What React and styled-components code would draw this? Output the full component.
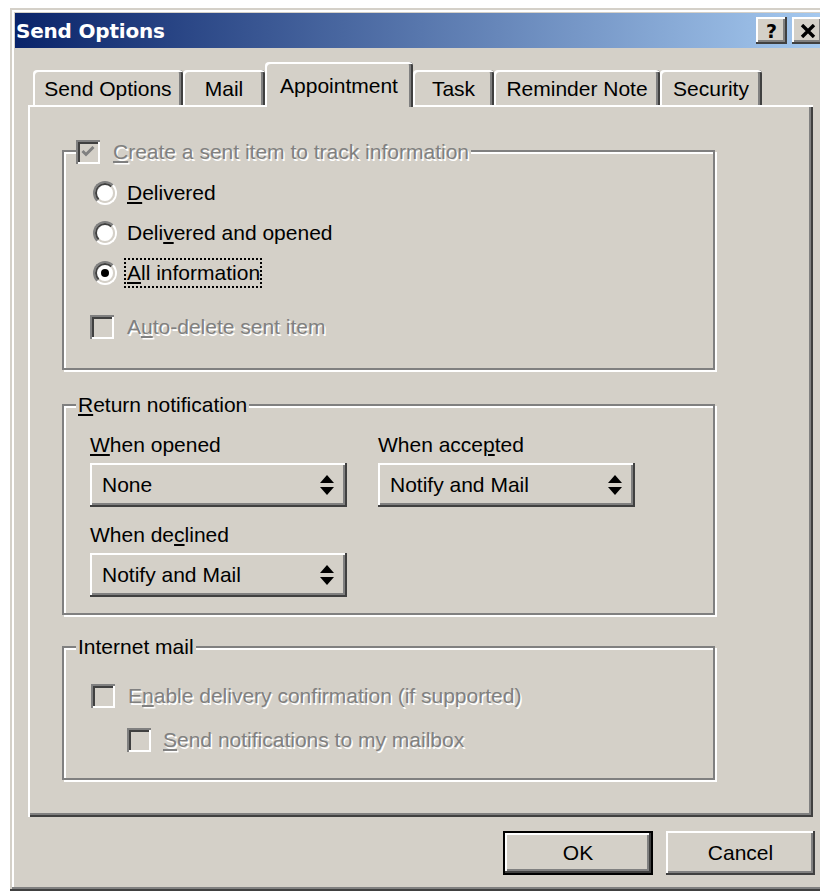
import React from 'react'
import styled, { createGlobalStyle } from 'styled-components'

const GlobalStyle = createGlobalStyle`
  html, body {
    margin: 0;
    background: #fff;
    overflow: hidden;
  }
  body {
    font-family: "Liberation Sans", Arial, sans-serif;
    font-size: 21px;
    color: #000;
  }
  u {
    text-decoration-thickness: 2px;
    text-underline-offset: 2px;
  }
`

const raised = `
  box-shadow: inset -2px -2px #404040, inset 2px 2px #fff,
    inset -4px -4px #808080, inset 4px 4px #d4d0c8;
`

const Window = styled.div`
  box-sizing: border-box;
  width: 822px;
  margin: 8px 0 0 10px;
  padding: 5px;
  background: #d4d0c8;
  box-shadow: inset -2px -2px #404040, inset 2px 2px #d4d0c8,
    inset -4px -4px #808080, inset 4px 4px #fff;
`

const TitleBar = styled.div`
  height: 35px;
  display: flex;
  align-items: center;
  justify-content: space-between;
  padding: 0 4px 0 1px;
  background: linear-gradient(to right, #0a246a, #a6caf0);
`

const Title = styled.span`
  font-family: "DejaVu Sans", Verdana, sans-serif;
  font-weight: bold;
  font-size: 20px;
  letter-spacing: -0.2px;
  color: #fff;
`

const TitleButtons = styled.div`
  display: flex;
  gap: 5px;
`

const TitleButton = styled.div`
  box-sizing: border-box;
  width: 31px;
  height: 27px;
  display: flex;
  align-items: center;
  justify-content: center;
  background: #d4d0c8;
  font-family: "DejaVu Sans", Verdana, sans-serif;
  font-weight: bold;
  font-size: 19px;
  ${raised}
`

const Body = styled.div`
  padding: 14px 14px 0 13px;
`

const TabStrip = styled.div`
  display: flex;
  align-items: flex-end;
  padding-left: 5px;
`

const Tab = styled.div`
  box-sizing: border-box;
  width: ${p => p.$w}px;
  height: ${p => (p.$active ? 45 : 35)}px;
  margin-bottom: ${p => (p.$active ? -2 : 0)}px;
  position: relative;
  z-index: ${p => (p.$active ? 1 : 0)};
  display: flex;
  align-items: center;
  justify-content: center;
  padding-top: 2px;
  background: #d4d0c8;
  border-radius: 4px 4px 0 0;
  white-space: nowrap;
  box-shadow: inset 2px 2px #fff, inset -2px 0 #404040, inset -4px 0 #808080;
`

const Panel = styled.div`
  box-sizing: border-box;
  width: 785px;
  height: 712px;
  padding: 34px 0 0 34px;
  box-shadow: inset 2px 2px #fff, inset -2px -2px #404040, inset -4px -4px #808080;
`

const GroupBox = styled.fieldset`
  box-sizing: border-box;
  width: 653px;
  margin: ${p => p.$top}px 0 0 0;
  padding: ${p => p.$pad};
  border: 2px solid #808080;
  box-shadow: inset 2px 2px #fff, 2px 2px #fff;
  min-inline-size: auto;
`

const Legend = styled.legend`
  margin-left: 12px;
  padding: 0 2px;
  height: 24px;
  line-height: 24px;
  background: #d4d0c8;
`

const LegendRow = styled.span`
  display: inline-flex;
  align-items: center;
  gap: 13px;
  margin-left: -2px;
`

const Caption = styled.span`
  color: ${p => (p.$disabled ? '#808080' : '#000')};
  text-shadow: ${p => (p.$disabled ? '1.5px 1.5px 0 #fff' : 'none')};
  white-space: nowrap;
`

const OptionRow = styled.div`
  display: flex;
  align-items: center;
  height: 40px;
  padding-left: ${p => p.$indent}px;
  margin-top: ${p => p.$top || 0}px;
  gap: ${p => p.$gap}px;
`

const CheckBox = styled.span`
  box-sizing: border-box;
  flex: none;
  width: 24px;
  height: 24px;
  display: flex;
  align-items: center;
  justify-content: center;
  background: ${p => (p.$disabled ? '#d4d0c8' : '#fff')};
  box-shadow: inset 2px 2px #808080, inset -2px -2px #fff,
    inset 4px 4px #404040, inset -4px -4px #d4d0c8;
`

const RadioOuter = styled.span`
  box-sizing: border-box;
  flex: none;
  width: 24px;
  height: 24px;
  border-radius: 50%;
  border: 2px solid;
  border-color: #808080 #fff #fff #808080;
`

const RadioInner = styled.span`
  box-sizing: border-box;
  width: 100%;
  height: 100%;
  display: flex;
  align-items: center;
  justify-content: center;
  border-radius: 50%;
  border: 2px solid;
  border-color: #404040 #d4d0c8 #d4d0c8 #404040;
  background: #fff;
`

const RadioDot = styled.span`
  width: 8px;
  height: 8px;
  border-radius: 50%;
  background: #000;
`

const FocusLabel = styled.span`
  padding: 2px 0 2px 1px;
  border: 2px dotted #000;
  margin-left: -3px;
  line-height: 22px;
  white-space: nowrap;
`

const FieldGrid = styled.div`
  display: grid;
  grid-template-columns: 257px 257px;
  column-gap: 31px;
  row-gap: 14px;
  padding: 14px 0 16px 26px;
`

const Field = styled.div`
  display: flex;
  flex-direction: column;
  gap: 4px;
`

const FieldLabel = styled.div`
  height: 28px;
  line-height: 28px;
`

const Select = styled.div`
  box-sizing: border-box;
  width: 257px;
  height: 44px;
  display: flex;
  align-items: center;
  justify-content: space-between;
  padding: 0 13px 0 12px;
  background: #d4d0c8;
  ${raised}
`

const ButtonRow = styled.div`
  display: flex;
  justify-content: flex-end;
  gap: 13px;
  padding: 14px 0 11px 0;
  margin-right: -2px;
`

const PushButton = styled.button`
  box-sizing: border-box;
  width: ${p => p.$w}px;
  height: 44px;
  padding: 0;
  font: inherit;
  color: #000;
  background: #d4d0c8;
  border: ${p => (p.$default ? '2px solid #000' : 'none')};
  ${raised}
`

const CheckMark = () => (
  <svg width="14" height="12" viewBox="0 0 14 12">
    <polyline points="1.5,5 5,8.5 12.5,1" fill="none" stroke="#808080" strokeWidth="3" />
  </svg>
)

const Arrows = () => (
  <svg width="14" height="22" viewBox="0 0 14 22">
    <polygon points="0,9 7,1 14,9" fill="#000" />
    <polygon points="0,13 7,21 14,13" fill="#000" />
  </svg>
)

const CloseGlyph = () => (
  <svg width="16" height="14" viewBox="0 0 16 14">
    <path d="M2 1 L14 13 M14 1 L2 13" stroke="#000" strokeWidth="3.4" />
  </svg>
)

const Radio = ({ checked }) => (
  <RadioOuter>
    <RadioInner>{checked && <RadioDot />}</RadioInner>
  </RadioOuter>
)

const tabs = [
  { label: 'Send Options', w: 150 },
  { label: 'Mail', w: 82 },
  { label: 'Appointment', w: 148, active: true },
  { label: 'Task', w: 81 },
  { label: 'Reminder Note', w: 166 },
  { label: 'Security', w: 102 },
]

const DropDown = ({ value }) => (
  <Select>
    <span>{value}</span>
    <Arrows />
  </Select>
)

export default function App() {
  return (
    <>
      <GlobalStyle />
      <Window>
        <TitleBar>
          <Title>Send Options</Title>
          <TitleButtons>
            <TitleButton>?</TitleButton>
            <TitleButton>
              <CloseGlyph />
            </TitleButton>
          </TitleButtons>
        </TitleBar>

        <Body>
          <TabStrip>
            {tabs.map(t => (
              <Tab key={t.label} $w={t.w} $active={t.active}>
                {t.label}
              </Tab>
            ))}
          </TabStrip>

          <Panel>
            <GroupBox $top={0} $pad="10px 0 21px 0">
              <Legend>
                <LegendRow>
                  <CheckBox $disabled>
                    <CheckMark />
                  </CheckBox>
                  <Caption $disabled>
                    <u>C</u>reate a sent item to track information
                  </Caption>
                </LegendRow>
              </Legend>
              <OptionRow $indent={29} $gap={10}>
                <Radio />
                <Caption>
                  <u>D</u>elivered
                </Caption>
              </OptionRow>
              <OptionRow $indent={29} $gap={10}>
                <Radio />
                <Caption>
                  Deli<u>v</u>ered and opened
                </Caption>
              </OptionRow>
              <OptionRow $indent={29} $gap={10}>
                <Radio checked />
                <FocusLabel>
                  <u>A</u>ll information
                </FocusLabel>
              </OptionRow>
              <OptionRow $indent={26} $gap={13} $top={14}>
                <CheckBox $disabled />
                <Caption $disabled>
                  A<u>u</u>to-delete sent item
                </Caption>
              </OptionRow>
            </GroupBox>

            <GroupBox $top={23} $pad="0">
              <Legend>
                <u>R</u>eturn notification
              </Legend>
              <FieldGrid>
                <Field>
                  <FieldLabel>
                    <u>W</u>hen opened
                  </FieldLabel>
                  <DropDown value="None" />
                </Field>
                <Field>
                  <FieldLabel>
                    When acce<u>p</u>ted
                  </FieldLabel>
                  <DropDown value="Notify and Mail" />
                </Field>
                <Field>
                  <FieldLabel>
                    When de<u>c</u>lined
                  </FieldLabel>
                  <DropDown value="Notify and Mail" />
                </Field>
              </FieldGrid>
            </GroupBox>

            <GroupBox $top={20} $pad="17px 0 18px 0">
              <Legend>Internet mail</Legend>
              <OptionRow $indent={27} $gap={13}>
                <CheckBox $disabled />
                <Caption $disabled>
                  E<u>n</u>able delivery confirmation (if supported)
                </Caption>
              </OptionRow>
              <OptionRow $indent={63} $gap={12} $top={4}>
                <CheckBox $disabled />
                <Caption $disabled>
                  <u>S</u>end notifications to my mailbox
                </Caption>
              </OptionRow>
            </GroupBox>
          </Panel>

          <ButtonRow>
            <PushButton $w={150} $default>
              OK
            </PushButton>
            <PushButton $w={149}>Cancel</PushButton>
          </ButtonRow>
        </Body>
      </Window>
    </>
  )
}
